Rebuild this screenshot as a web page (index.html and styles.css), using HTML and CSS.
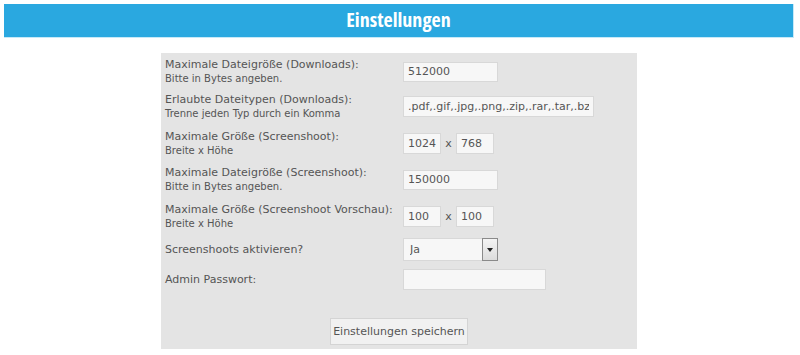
FILE: index.html
```html
<!DOCTYPE html>
<html lang="de">
<head>
  <meta charset="UTF-8">
  <meta name="viewport" content="width=device-width, initial-scale=1.0">
  <title>Einstellungen</title>
  <link rel="stylesheet" href="styles.css">
</head>
<body>
  <h1 class="page-title">Einstellungen</h1>

  <form class="settings" onsubmit="return false;">
    <div class="row">
      <label class="label" for="max-download">Maximale Dateigröße (Downloads):<small>Bitte in Bytes angeben.</small></label>
      <input id="max-download" class="field" type="text" value="512000">
    </div>

    <div class="row">
      <label class="label" for="types">Erlaubte Dateitypen (Downloads):<small>Trenne jeden Typ durch ein Komma</small></label>
      <input id="types" class="field field-wide" type="text" value=".pdf,.gif,.jpg,.png,.zip,.rar,.tar,.bz2,.7z">
    </div>

    <div class="row row-pair">
      <label class="label" for="shot-w">Maximale Größe (Screenshoot):<small>Breite x Höhe</small></label>
      <div class="pair">
        <input id="shot-w" class="field field-small" type="text" value="1024">
        <span class="times">x</span>
        <input class="field field-small" type="text" value="768">
      </div>
    </div>

    <div class="row">
      <label class="label" for="max-shot">Maximale Dateigröße (Screenshoot):<small>Bitte in Bytes angeben.</small></label>
      <input id="max-shot" class="field" type="text" value="150000">
    </div>

    <div class="row row-pair">
      <label class="label" for="thumb-w">Maximale Größe (Screenshoot Vorschau):<small>Breite x Höhe</small></label>
      <div class="pair">
        <input id="thumb-w" class="field field-small" type="text" value="100">
        <span class="times">x</span>
        <input class="field field-small" type="text" value="100">
      </div>
    </div>

    <div class="row row-select">
      <label class="label" for="enable">Screenshoots aktivieren?</label>
      <div class="select-wrap">
        <select id="enable" class="select">
          <option>Ja</option>
          <option>Nein</option>
        </select>
        <span class="select-arrow"></span>
      </div>
    </div>

    <div class="row">
      <label class="label" for="pass">Admin Passwort:</label>
      <input id="pass" class="field field-pass" type="password">
    </div>

    <div class="actions">
      <button class="save" type="submit">Einstellungen speichern</button>
    </div>
  </form>
</body>
</html>
```

FILE: styles.css
```css
body {
  margin: 0;
  padding: 4px 6px 0 4px;
  font-family: Verdana, "DejaVu Sans", sans-serif;
  background: #fff;
  color: #555;
}

.page-title {
  margin: 0;
  height: 33px;
  line-height: 32px;
  background-color: #2aa8e0;
  border: 1px solid #c6e9f8;
  border-left: 0;
  border-top: 0;
  color: #fff;
  text-align: center;
  font-family: "Open Sans", sans-serif;
  font-stretch: condensed;
  font-weight: 700;
  font-size: 20px;
}

.settings {
  width: 476px;
  margin: 15px auto 0;
  padding: 1px 0 4px;
  box-sizing: border-box;
  background-color: #e4e4e4;
}

.row {
  display: flex;
  align-items: center;
  padding: 4px 0 4px 4px;
}

.row-pair {
  padding-top: 6px;
  padding-bottom: 5px;
}

.row-select {
  padding-top: 3px;
}

.label {
  width: 238px;
  font-size: 11px;
  line-height: 14px;
  color: #555;
}

.label small {
  display: block;
  font-size: 10px;
  line-height: 13px;
}

.field {
  width: 95px;
  height: 20px;
  padding: 0 4px;
  box-sizing: border-box;
  border: 1px solid #d8d8d8;
  background-color: #f7f7f7;
  font-family: Verdana, "DejaVu Sans", sans-serif;
  font-size: 11px;
  color: #555;
  outline: none;
}

.field-wide {
  width: 191px;
  height: 21px;
}

.field-small {
  width: 38px;
  height: 21px;
}

.field-pass {
  width: 143px;
  height: 21px;
}

.pair {
  display: flex;
  align-items: center;
}

.times {
  width: 15px;
  text-align: center;
  font-size: 11px;
}

.select-wrap {
  display: flex;
  position: relative;
  width: 95px;
  height: 23px;
}

.select {
  appearance: none;
  -webkit-appearance: none;
  width: 95px;
  height: 23px;
  padding: 0 6px;
  border: 1px solid #d8d8d8;
  background-color: #f7f7f7;
  font-family: Verdana, "DejaVu Sans", sans-serif;
  font-size: 11px;
  color: #555;
}

.select-arrow {
  position: absolute;
  right: 0;
  top: 0;
  width: 16px;
  height: 23px;
  box-sizing: border-box;
  border: 1px solid #8a8a8a;
  background: linear-gradient(#f4f4f4, #dcdcdc);
  pointer-events: none;
}

.select-arrow::after {
  content: "";
  position: absolute;
  left: 4px;
  top: 9px;
  border-left: 3px solid transparent;
  border-right: 3px solid transparent;
  border-top: 4px solid #222;
}

.actions {
  display: flex;
  justify-content: center;
  padding: 24px 0 0;
}

.save {
  width: 138px;
  height: 27px;
  padding: 0;
  border: 1px solid #d4d4d4;
  background-color: #f1f1f1;
  font-family: Verdana, "DejaVu Sans", sans-serif;
  font-size: 11px;
  color: #555;
  cursor: pointer;
}
```
